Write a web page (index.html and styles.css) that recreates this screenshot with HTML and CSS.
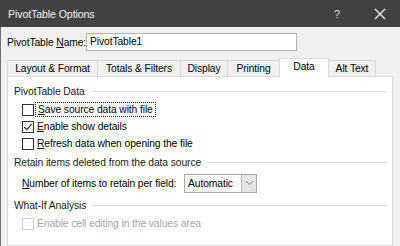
FILE: index.html
```html
<!DOCTYPE html>
<html lang="en">
<head>
    <meta charset="UTF-8">
    <title>PivotTable Options</title>
    <link rel="stylesheet" href="styles.css">
</head>
<body>
<div class="window">
    <div class="titlebar">
        <span class="title">PivotTable Options</span>
        <span class="help">?</span>
        <span class="close">
            <svg width="12" height="12" viewBox="0 0 12 12"><path d="M1 1 L11 11 M11 1 L1 11" stroke="#f0f0f0" stroke-width="1.3" fill="none"/></svg>
        </span>
    </div>

    <div class="client">
        <div class="name-row">
            <span class="label">PivotTable <u>N</u>ame:</span>
            <div class="name-input">PivotTable1</div>
        </div>

        <div class="tabs">
            <div class="tab w-layout">Layout &amp; Format</div>
            <div class="tab w-totals">Totals &amp; Filters</div>
            <div class="tab w-display">Display</div>
            <div class="tab w-printing">Printing</div>
            <div class="tab w-data active">Data</div>
            <div class="tab w-alt">Alt Text</div>
        </div>

        <div class="panel">
            <div class="group-head"><span>PivotTable Data</span><span class="rule"></span></div>
            <div class="check">
                <span class="box"></span>
                <span class="focus"><u>S</u>ave source data with file</span>
            </div>
            <div class="check">
                <span class="box">
                    <svg width="10" height="10" viewBox="0 0 10 10"><path d="M1.2 5 L3.8 7.6 L8.8 1.8" stroke="#222" stroke-width="1.1" fill="none"/></svg>
                </span>
                <span><u>E</u>nable show details</span>
            </div>
            <div class="check">
                <span class="box"></span>
                <span><u>R</u>efresh data when opening the file</span>
            </div>

            <div class="group-head second"><span>Retain items deleted from the data source</span><span class="rule"></span></div>
            <div class="field-row">
                <span class="field-label"><u>N</u>umber of items to retain per field:</span>
                <div class="select">
                    <span class="select-value">Automatic</span>
                    <span class="select-btn">
                        <svg width="9" height="6" viewBox="0 0 9 6"><path d="M1 1 L4.5 4.5 L8 1" stroke="#888" stroke-width="1" fill="none"/></svg>
                    </span>
                </div>
            </div>

            <div class="group-head third"><span>What-If Analysis</span><span class="rule"></span></div>
            <div class="check disabled">
                <span class="box"></span>
                <span>Enable cell editing in the values area</span>
            </div>
        </div>
    </div>
</div>
</body>
</html>
```

FILE: styles.css
```css
* {
    margin: 0;
    padding: 0;
    box-sizing: border-box;
}

body {
    width: 400px;
    height: 246px;
    overflow: hidden;
    background-color: #f0f0f0;
    font-family: "Liberation Sans", Arial, sans-serif;
    font-size: 10.3px;
    letter-spacing: -0.1px;
    color: #000;
    white-space: nowrap;
}

u {
    text-decoration: underline;
    text-underline-offset: 1px;
}

.window {
    display: flex;
    flex-direction: column;
    height: 246px;
}

.titlebar {
    flex-shrink: 0;
    height: 27px;
    background-color: #424242;
    color: #f2f2f2;
    display: flex;
    align-items: center;
    padding-left: 8px;
}

.title {
    font-size: 10.6px;
    flex: 1;
}

.help {
    font-size: 11px;
    width: 14px;
    margin-right: 26px;
    color: #d8d8d8;
}

.close {
    display: flex;
    width: 12px;
    margin-right: 14px;
}

.client {
    flex: 1;
    min-height: 0;
    display: flex;
    flex-direction: column;
    border-left: 1px solid #707070;
    padding: 6px 7px 0 6px;
}

.name-row {
    flex-shrink: 0;
    display: flex;
    align-items: center;
    height: 18px;
}

.label {
    width: 79px;
}

.name-input {
    width: 211px;
    height: 18px;
    background: #fff;
    border: 1px solid #b4b4b4;
    padding-left: 3px;
    line-height: 16px;
}

.tabs {
    flex-shrink: 0;
    display: flex;
    align-items: flex-end;
    margin-top: 7px;
    height: 18px;
    position: relative;
    z-index: 1;
}

.tab {
    height: 16px;
    border: 1px solid #d9d9d9;
    border-bottom: none;
    border-right: none;
    background: #f0f0f0;
    text-align: center;
    line-height: 16px;
}

.tab.active {
    height: 19px;
    margin-bottom: -1px;
    background: #fff;
    border-right: 1px solid #d9d9d9;
    line-height: 15px;
}

.w-layout { width: 90px; }
.w-totals { width: 83px; }
.w-display { width: 47px; }
.w-printing { width: 52px; }
.w-data { width: 50px; }
.w-alt { width: 47px; border-left: none; border-right: 1px solid #d9d9d9; }

.panel {
    flex: 1;
    min-height: 0;
    background: #fff;
    border: 1px solid #d9d9d9;
    padding: 6px 5px 0 6px;
}

.group-head {
    display: flex;
    align-items: center;
    height: 16px;
    color: #1a1a1a;
}

.group-head .rule {
    flex: 1;
    height: 1px;
    background: #dcdcdc;
    margin-left: 6px;
}

.group-head.second {
    margin-top: 2px;
}

.group-head.third {
    margin-top: 4px;
}

.check {
    display: flex;
    align-items: center;
    height: 17px;
    padding-left: 8px;
}

.group-head + .check {
    margin-top: 2px;
}

.box {
    width: 12px;
    height: 12px;
    border: 1px solid #333;
    background: #fff;
    margin-right: 3px;
    display: flex;
    align-items: center;
    justify-content: center;
}

.focus {
    outline: 1px dotted #222;
    outline-offset: 1px;
    padding: 0 1px;
}

.check.disabled {
    color: #a6a6a6;
}

.check.disabled .box {
    border-color: #cccccc;
}

.field-row {
    display: flex;
    align-items: center;
    height: 20px;
    margin-top: 3px;
    padding-left: 8px;
}

.field-label {
    width: 158px;
}

.select {
    display: flex;
    margin-left: 4px;
    width: 73px;
    height: 19px;
    border: 1px solid #a8a8a8;
    background: #fff;
}

.select-value {
    flex: 1;
    padding-left: 3px;
    line-height: 17px;
}

.select-btn {
    width: 15px;
    background: #e6e6e6;
    border-left: 1px solid #b8b8b8;
    display: flex;
    align-items: center;
    justify-content: center;
}
```
